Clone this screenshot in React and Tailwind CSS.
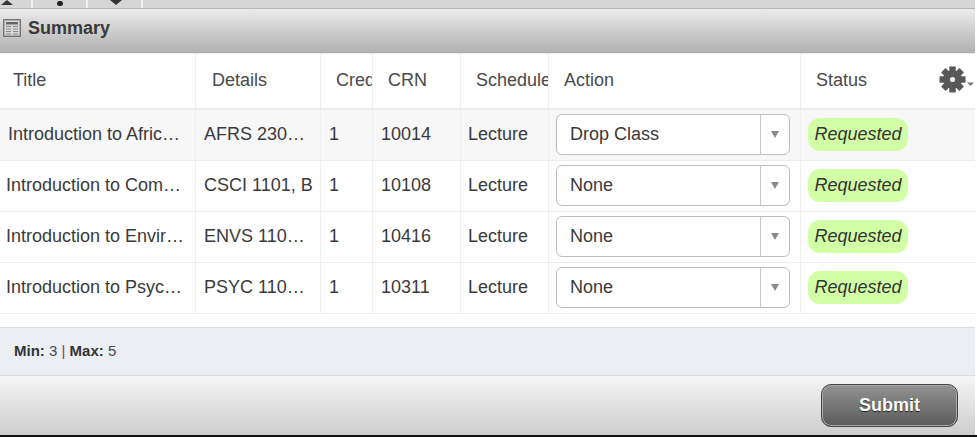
import React from 'react';

const GRID = 'grid grid-cols-[196px_125px_52px_88px_88px_252px_174px]';

const rows = [
  { title: 'Introduction to African American Studies', details: 'AFRS 2300, A', crn: '10014', action: 'Drop Class', titlePad: 'pl-2', bg: 'bg-[#f7f7f7]' },
  { title: 'Introduction to Computing', details: 'CSCI 1101, B', crn: '10108', action: 'None', titlePad: 'pl-1.5', bg: 'bg-white' },
  { title: 'Introduction to Environmental Studies', details: 'ENVS 1101, A', crn: '10416', action: 'None', titlePad: 'pl-1.5', bg: 'bg-white' },
  { title: 'Introduction to Psychology', details: 'PSYC 1101, C', crn: '10311', action: 'None', titlePad: 'pl-1.5', bg: 'bg-white' },
];

function TableIcon() {
  return (
    <svg width="18" height="18" viewBox="0 0 18 18" className="shrink-0">
      <rect x="0.75" y="0.75" width="16.5" height="16.5" fill="#d8d8d8" stroke="#666" strokeWidth="1.2" />
      <rect x="3" y="3" width="12" height="2.5" fill="#666" />
      <path d="M3 7.5h5M10 7.5h5M3 10h5M10 10h5M3 12.5h5M10 12.5h5M3 15h5M10 15h5" stroke="#888" strokeWidth="1.2" />
    </svg>
  );
}

function GearIcon() {
  return (
    <svg width="36" height="28" viewBox="0 0 36 28" className="shrink-0">
      <g fill="#585858" transform="translate(13.5 13.5)">
        {[0, 45, 90, 135].map((a) => (
          <rect key={a} x="-3.2" y="-13" width="6.4" height="26" transform={`rotate(${a})`} />
        ))}
        <circle r="9.5" />
      </g>
      <circle cx="13.5" cy="13.5" r="2.6" fill="#eee" />
      <path d="M28 16.5h7l-3.5 3.5z" fill="#777" />
    </svg>
  );
}

function SelectBox({ value }) {
  return (
    <div className="flex h-[41px] w-[234px] items-stretch rounded-md border border-[#bdbdbd] bg-white">
      <div className="flex-1 pl-[13px] leading-[39px]">{value}</div>
      <div className="flex w-[29px] items-center justify-center border-l border-[#c8c8c8]">
        <span className="h-0 w-0 border-x-[4px] border-t-[7px] border-x-transparent border-t-[#8a8a8a]" />
      </div>
    </div>
  );
}

function Row({ row }) {
  const cell = 'flex items-center border-r border-[#efefef] min-w-0 pb-0.5';
  return (
    <div className={`${GRID} h-[51px] border-b border-[#ececec] text-[18px] text-[#3a3a3a] ${row.bg}`}>
      <div className={`${cell} ${row.titlePad}`}><span className="truncate pr-[10px]">{row.title}</span></div>
      <div className={`${cell} pl-2`}><span className="truncate pr-1.5">{row.details}</span></div>
      <div className={`${cell} pl-2`}>1</div>
      <div className={`${cell} pl-2`}>{row.crn}</div>
      <div className={`${cell} pl-[7px]`}>Lecture</div>
      <div className={`${cell} pl-[7px]`}><SelectBox value={row.action} /></div>
      <div className="flex items-center pb-0.5 pl-[7px]">
        <span className="flex h-[33px] w-[100px] items-center justify-center rounded-xl bg-[#d2ffa6] italic text-[#333]">Requested</span>
      </div>
    </div>
  );
}

export default function App() {
  const head = 'flex items-center border-r border-[#efefef] overflow-hidden whitespace-nowrap pb-0.5';
  return (
    <div className="h-[437px] w-[977px] bg-white font-['Liberation_Sans',Arial,sans-serif]">
      <div className="h-[435px] w-[975px] overflow-hidden">
        {/* leftover toolbar strip above the panel */}
        <div className="flex h-[9px] items-stretch border-b border-[#b5b5b5] bg-[#d6d6d6]">
          <div className="flex w-[33px] items-start justify-start border-r-2 border-[#f2f2f2] pl-px">
            <span className="h-0 w-0 border-x-[6px] border-b-[5px] border-x-transparent border-b-[#333]" />
          </div>
          <div className="flex w-[55px] items-start justify-center border-r-2 border-[#f2f2f2]">
            <span className="mt-px h-[5px] w-[6px] rounded-full bg-[#222]" />
          </div>
          <div className="flex w-[55px] items-start justify-center border-r-2 border-[#f2f2f2] pl-0.5">
            <span className="h-0 w-0 border-x-[6px] border-t-[5px] border-x-transparent border-t-[#333]" />
          </div>
        </div>

        <div className="flex h-[44px] items-center gap-[7px] bg-gradient-to-b from-[#ececec] to-[#b0b0b0] pb-1.5 pl-[3px]">
          <TableIcon />
          <h2 className="text-[18px] font-bold text-[#3a3a3a]">Summary</h2>
        </div>

        <div className={`${GRID} h-[57px] border-t border-b-2 border-[#ececec] text-[18px] text-[#4a4a4a]`}>
          <div className={`${head} pl-[13px]`}>Title</div>
          <div className={`${head} pl-[16px]`}>Details</div>
          <div className={`${head} pl-[15px]`}>Credits</div>
          <div className={`${head} pl-[15px]`}>CRN</div>
          <div className={`${head} pl-[15px]`}>Schedule</div>
          <div className={`${head} pl-[15px]`}>Action</div>
          <div className="flex items-center justify-between pb-0.5 pl-[15px]">
            <span>Status</span>
            <GearIcon />
          </div>
        </div>

        {rows.map((row) => (
          <Row key={row.crn} row={row} />
        ))}

        <div className="h-[13px] bg-white" />

        <div className="flex h-[49px] items-center border-y border-[#dcdcdc] bg-[#ebeef3] pl-[14px] text-[15px] text-[#4a4a4a]">
          <b className="text-[#333]">Min:</b>&nbsp;3&nbsp;<span className="text-[#8a3a5a]">|</span>&nbsp;<b className="text-[#333]">Max:</b>&nbsp;5
        </div>

        <div className="flex h-[59px] items-center justify-end bg-gradient-to-b from-[#f6f6f6] to-[#cdcdcd] pr-[17px]">
          <button className="h-[43px] w-[137px] rounded-[10px] border border-[#444] bg-gradient-to-b from-[#929292] to-[#5c5c5c] text-[18px] font-bold text-white shadow-[inset_0_0_0_1px_#aaa] [text-shadow:0_1px_1px_#222]">
            Submit
          </button>
        </div>
      </div>
      <div className="h-0.5 bg-[#111]" />
    </div>
  );
}
